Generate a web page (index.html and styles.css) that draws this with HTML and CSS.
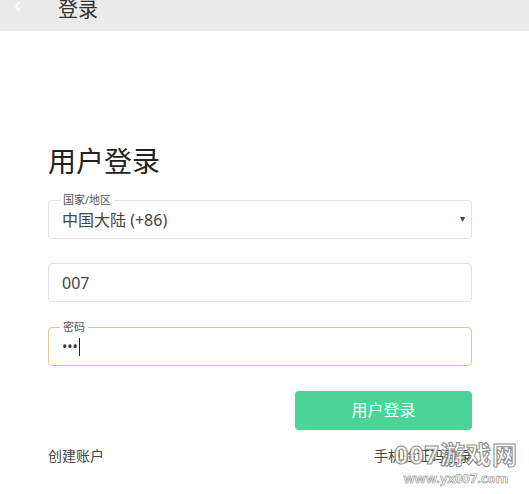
FILE: index.html
```html
<!DOCTYPE html>
<html lang="zh-CN">
<head>
  <meta charset="UTF-8" />
  <meta name="viewport" content="width=device-width, initial-scale=1" />
  <title>登录</title>
  <link rel="stylesheet" href="styles.css">
</head>
<body>
  <header class="topbar">
    <span class="back">&lsaquo;</span>
    <span class="topbar-title">登录</span>
  </header>

  <main class="login">
    <h1>用户登录</h1>

    <fieldset class="field">
      <legend>国家/地区</legend>
      <div class="select-row">
        <span>中国大陆 (+86)</span>
        <span class="caret">▾</span>
      </div>
    </fieldset>

    <div class="field plain">007</div>

    <fieldset class="field active">
      <legend>密码</legend>
      <div class="pwd">•••<span class="cursor"></span></div>
    </fieldset>

    <div class="actions">
      <button type="button">用户登录</button>
    </div>

    <div class="links">
      <span>创建账户</span>
      <span>手机验证码登录</span>
    </div>
  </main>

  <div class="watermark">
    <div class="wm-big">007游戏网</div>
    <div class="wm-small">www.yx007.com</div>
  </div>
</body>
</html>
```

FILE: styles.css
```css
* { box-sizing: border-box; }

body {
  margin: 0;
  width: 529px;
  height: 494px;
  overflow: hidden;
  background: #fff;
  font-family: "Noto Sans", "Noto Sans CJK SC", sans-serif;
  color: #333;
  position: relative;
}

.topbar {
  height: 31px;
  background: #ebebeb;
  display: flex;
  align-items: flex-end;
  padding: 0 0 9px 14px;
  overflow: hidden;
}

.back {
  color: #fff;
  font-size: 22px;
  line-height: 22px;
  width: 44px;
  margin-top: -8px;
  align-self: flex-start;
}

.topbar-title {
  font-size: 20px;
  line-height: 24px;
  color: #333;
}

.login {
  padding: 112px 57px 0 48px;
}

h1 {
  margin: 0 0 15px;
  font-size: 28px;
  line-height: 36px;
  font-weight: 400;
  color: #222;
}

.field {
  margin: 0;
  border: 1px solid #e2e2e2;
  border-radius: 4px;
  min-width: 0;
}

fieldset.field {
  padding: 3px 13px 7px;
}

.field legend {
  font-size: 11px;
  line-height: 12px;
  color: #555;
  padding: 0 3px;
  margin-left: -2px;
}

.select-row {
  display: flex;
  justify-content: space-between;
  align-items: center;
  font-size: 16px;
  line-height: 22px;
  color: #444;
}

.caret {
  font-size: 10px;
  color: #444;
  margin-right: -7px;
  margin-top: -4px;
}

.plain {
  margin-top: 24px;
  height: 39px;
  padding: 0 13px;
  display: flex;
  align-items: center;
  font-size: 16px;
  color: #444;
}

.active {
  margin-top: 19px;
  border-color: #e3c48f;
}

.pwd {
  font-size: 14px;
  line-height: 22px;
  color: #333;
  display: flex;
  align-items: center;
}

.cursor {
  display: inline-block;
  width: 1px;
  height: 18px;
  background: #222;
  margin-left: 1px;
}

.actions {
  display: flex;
  justify-content: flex-end;
  margin-top: 25px;
}

button {
  width: 177px;
  height: 39px;
  border: none;
  border-radius: 4px;
  background: #4dd396;
  color: #fff;
  font-family: inherit;
  font-size: 16px;
  line-height: 20px;
  padding: 0 0 2px;
}

.links {
  margin-top: 16px;
  display: flex;
  justify-content: space-between;
  font-size: 14px;
  line-height: 20px;
  color: #444;
}

.watermark {
  position: absolute;
  left: 394px;
  top: 438px;
  white-space: nowrap;
  text-align: center;
  color: rgba(255, 255, 255, 0.8);
  -webkit-text-stroke: 1px #8a8a8a;
}

.wm-big {
  font-size: 25px;
  line-height: 32px;
  font-weight: 700;
  letter-spacing: 1px;
}

.wm-small {
  font-size: 13px;
  line-height: 16px;
  font-weight: 700;
  -webkit-text-stroke: 0.6px #8a8a8a;
}
```
